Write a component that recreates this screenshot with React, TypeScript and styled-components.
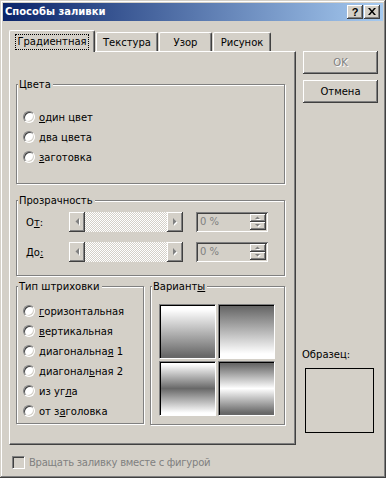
import React from 'react';
import styled, { createGlobalStyle, css } from 'styled-components';

const face = '#D4D0C8';

const GlobalStyle = createGlobalStyle`
  html, body {
    margin: 0;
    padding: 0;
    background: ${face};
  }
  body {
    font-family: 'DejaVu Sans', 'Liberation Sans', sans-serif;
    font-size: 10px;
    color: #000;
  }
  * {
    box-sizing: border-box;
  }
`;

const raised = css`
  background: ${face};
  box-shadow: inset -1px -1px #404040, inset 1px 1px #fff, inset -2px -2px #808080;
`;

const sunken = css`
  box-shadow: inset 1px 1px #808080, inset -1px -1px #fff, inset 2px 2px #404040, inset -2px -2px ${face};
`;

const Window = styled.div`
  width: 386px;
  height: 478px;
  padding: 3px;
  display: flex;
  flex-direction: column;
  background: ${face};
  box-shadow: inset -1px -1px #404040, inset 1px 1px ${face}, inset -2px -2px #808080, inset 2px 2px #fff;
`;

const TitleBar = styled.div`
  height: 18px;
  flex: none;
  display: flex;
  align-items: center;
  gap: 1px;
  padding: 0 3px 0 2px;
  background: linear-gradient(to right, #0a246a, #a6caf0);
`;

const Title = styled.div`
  flex: 1;
  color: #fff;
  font-weight: bold;
  font-size: 10px;
  line-height: 14px;
`;

const CaptionButton = styled.div`
  width: 16px;
  height: 14px;
  ${raised};
  display: flex;
  align-items: center;
  justify-content: center;
  font-family: 'Liberation Sans', sans-serif;
  font-weight: bold;
  font-size: 11px;
  line-height: 12px;
  padding-bottom: 1px;
`;

const Body = styled.div`
  display: grid;
  grid-template-columns: 287px 75px;
  column-gap: 7px;
  padding: 9px 0 0 6px;
`;

const LeftCol = styled.div`
  display: flex;
  flex-direction: column;
`;

const TabStrip = styled.div`
  height: 21px;
  display: flex;
  align-items: flex-end;
`;

const Tab = styled.div<{ $w: number; $active?: boolean }>`
  position: relative;
  z-index: ${(p) => (p.$active ? 1 : 0)};
  width: ${(p) => p.$w}px;
  height: ${(p) => (p.$active ? 22 : 19)}px;
  margin-bottom: ${(p) => (p.$active ? -1 : 0)}px;
  margin-left: ${(p) => (p.$active ? 0 : 1)}px;
  background: ${face};
  border-top: 1px solid #fff;
  border-left: 1px solid #fff;
  border-right: 1px solid #404040;
  border-top-left-radius: 2px;
  border-top-right-radius: 2px;
  box-shadow: inset -1px 0 #808080;
  display: flex;
  justify-content: center;
  padding-top: ${(p) => (p.$active ? 3 : 2)}px;
  white-space: nowrap;
`;

const TabLabel = styled.span<{ $focus?: boolean }>`
  height: 16px;
  line-height: 14px;
  padding: 0 1px;
  border: 1px ${(p) => (p.$focus ? 'dotted #000' : 'solid transparent')};
`;

const Panel = styled.div`
  height: 394px;
  border-top: 1px solid #fff;
  border-left: 1px solid #fff;
  border-right: 1px solid #404040;
  border-bottom: 1px solid #404040;
  box-shadow: inset -1px -1px #808080;
  padding-left: 6px;
  display: flex;
  flex-direction: column;
`;

const Group = styled.div<{ $w: number; $h: number; $mt?: number; $ml?: number }>`
  width: ${(p) => p.$w}px;
  height: ${(p) => p.$h}px;
  margin-top: ${(p) => p.$mt ?? 0}px;
  margin-left: ${(p) => p.$ml ?? 0}px;
  flex: none;
  border: 1px solid #808080;
  box-shadow: inset 1px 1px #fff, 1px 1px #fff;
  display: flex;
  flex-direction: column;
`;

const Caption = styled.div`
  align-self: flex-start;
  margin: -7px 0 0 1px;
  padding: 0 2px 0 1px;
  line-height: 14px;
  background: ${face};
`;

const RadioList = styled.div<{ $mt: number }>`
  margin-top: ${(p) => p.$mt}px;
  padding-left: 6px;
  display: flex;
  flex-direction: column;
`;

const RadioRow = styled.div`
  height: 20px;
  display: flex;
  align-items: center;
  gap: 4px;
  white-space: nowrap;
`;

const RadioDot = styled.span`
  width: 12px;
  height: 12px;
  flex: none;
  border-radius: 50%;
  background: #fff;
  border: 1px solid;
  border-color: #808080 #fff #fff #808080;
  box-shadow: inset 1px 1px #404040, inset -1px -1px ${face};
`;

const U = styled.span`
  text-decoration: underline;
  text-underline-offset: 1px;
`;

const SliderRows = styled.div`
  margin-top: 4px;
  padding-left: 9px;
  display: flex;
  flex-direction: column;
  gap: 10px;
`;

const SliderRow = styled.div`
  height: 20px;
  display: flex;
  align-items: center;
`;

const SliderLabel = styled.span`
  width: 43px;
  flex: none;
`;

const Track = styled.div`
  width: 114px;
  height: 20px;
  display: flex;
`;

const ArrowButton = styled.div`
  width: 16px;
  ${raised};
  display: flex;
  align-items: center;
  justify-content: center;
`;

const TrackFill = styled.div`
  flex: 1;
  background: repeating-conic-gradient(#fff 0 25%, ${face} 0 50%) 0 0 / 2px 2px;
`;

const SpinBox = styled.div`
  width: 72px;
  height: 20px;
  margin-left: 13px;
  padding: 2px;
  background: ${face};
  ${sunken};
  display: flex;
`;

const SpinText = styled.div`
  flex: 1;
  color: #808080;
  padding-left: 2px;
  line-height: 16px;
`;

const SpinButtons = styled.div`
  width: 16px;
  display: flex;
  flex-direction: column;
`;

const SpinHalf = styled.div`
  flex: 1;
  ${raised};
  display: flex;
  align-items: center;
  justify-content: center;
`;

const BottomRow = styled.div`
  display: flex;
  margin-top: 10px;
`;

const VariantGrid = styled.div`
  display: grid;
  grid-template-columns: 57px 57px;
  grid-template-rows: 55px 55px;
  gap: 2px;
  margin: 10px 0 0 8px;
`;

const Swatch = styled.div<{ $fill: string }>`
  background: ${(p) => p.$fill};
  border: 1px solid;
  border-color: #808080 #fff #fff #808080;
  box-shadow: inset 1px 1px #000;
`;

const CheckRow = styled.div`
  margin: 11px 0 0 3px;
  height: 13px;
  display: flex;
  align-items: center;
  gap: 4px;
  color: #808080;
  white-space: nowrap;
  letter-spacing: -0.25px;
`;

const CheckBox = styled.span`
  width: 13px;
  height: 13px;
  flex: none;
  background: ${face};
  border: 1px solid;
  border-color: #808080 #fff #fff #808080;
  box-shadow: inset 1px 1px #404040, inset -1px -1px ${face};
`;

const RightCol = styled.div`
  margin-top: 21px;
  display: flex;
  flex-direction: column;
`;

const PushButton = styled.div<{ $disabled?: boolean; $mt?: number }>`
  height: 23px;
  margin-top: ${(p) => p.$mt ?? 0}px;
  ${raised};
  display: flex;
  align-items: center;
  justify-content: center;
  color: ${(p) => (p.$disabled ? '#808080' : '#000')};
  text-shadow: ${(p) => (p.$disabled ? '1px 1px #fff' : 'none')};
`;

const SampleLabel = styled.div`
  margin: 245px 0 0 -1px;
  line-height: 14px;
`;

const SampleBox = styled.div`
  width: 69px;
  height: 65px;
  margin: 6px 0 0 2px;
  border: 1px solid #000;
  background: ${face};
`;

const Arrow = ({ dir }: { dir: 'left' | 'right' | 'up' | 'down' }) => {
  const pts = {
    left: '4,0 4,7 0.5,3.5',
    right: '0,0 0,7 3.5,3.5',
    up: '0,3 5,3 2.5,0.5',
    down: '0,0 5,0 2.5,2.5',
  }[dir];
  const horiz = dir === 'left' || dir === 'right';
  const w = horiz ? 5 : 6;
  const h = horiz ? 8 : 4;
  return (
    <svg width={w} height={h} viewBox={`0 0 ${w} ${h}`}>
      <polygon points={pts} fill="#fff" transform="translate(1,1)" />
      <polygon points={pts} fill="#808080" />
    </svg>
  );
};

const Slider = ({ label }: { label: React.ReactNode }) => (
  <SliderRow>
    <SliderLabel>{label}</SliderLabel>
    <Track>
      <ArrowButton>
        <Arrow dir="left" />
      </ArrowButton>
      <TrackFill />
      <ArrowButton>
        <Arrow dir="right" />
      </ArrowButton>
    </Track>
    <SpinBox>
      <SpinText>0 %</SpinText>
      <SpinButtons>
        <SpinHalf>
          <Arrow dir="up" />
        </SpinHalf>
        <SpinHalf>
          <Arrow dir="down" />
        </SpinHalf>
      </SpinButtons>
    </SpinBox>
  </SliderRow>
);

const Radio = ({ children }: { children: React.ReactNode }) => (
  <RadioRow>
    <RadioDot />
    <span>{children}</span>
  </RadioRow>
);

const dark = '#686868';
const swatches = [
  `linear-gradient(#fff 8%, ${dark} 96%)`,
  `linear-gradient(${dark} 4%, #fff 92%)`,
  `linear-gradient(#fff 4%, ${dark} 50%, #fff 96%)`,
  `linear-gradient(${dark} 4%, #fff 50%, ${dark} 96%)`,
];

const App = () => (
  <>
    <GlobalStyle />
    <Window>
      <TitleBar>
        <Title>Способы заливки</Title>
        <CaptionButton>?</CaptionButton>
        <CaptionButton>
          <svg width="8" height="7" viewBox="0 0 8 7">
            <path d="M0 0h2l2 2.5L6 0h2L5 3.5 8 7H6L4 4.5 2 7H0l3-3.5z" fill="#000" />
          </svg>
        </CaptionButton>
      </TitleBar>
      <Body>
        <LeftCol>
          <TabStrip>
            <Tab $w={86} $active>
              <TabLabel $focus>Градиентная</TabLabel>
            </Tab>
            <Tab $w={62}>
              <TabLabel>Текстура</TabLabel>
            </Tab>
            <Tab $w={53}>
              <TabLabel>Узор</TabLabel>
            </Tab>
            <Tab $w={58}>
              <TabLabel>Рисунок</TabLabel>
            </Tab>
          </TabStrip>
          <Panel>
            <Group $w={269} $h={100} $mt={32}>
              <Caption>Цвета</Caption>
              <RadioList $mt={15}>
                <Radio>
                  <U>о</U>дин цвет
                </Radio>
                <Radio>
                  <U>д</U>ва цвета
                </Radio>
                <Radio>
                  <U>з</U>аготовка
                </Radio>
              </RadioList>
            </Group>
            <Group $w={269} $h={76} $mt={16}>
              <Caption>Прозрачность</Caption>
              <SliderRows>
                <Slider
                  label={
                    <>
                      О<U>т</U>:
                    </>
                  }
                />
                <Slider
                  label={
                    <>
                      До<U>:</U>
                    </>
                  }
                />
              </SliderRows>
            </Group>
            <BottomRow>
              <Group $w={128} $h={138}>
                <Caption>Тип штриховки</Caption>
                <RadioList $mt={7}>
                  <Radio>
                    <U>г</U>оризонтальная
                  </Radio>
                  <Radio>
                    <U>в</U>ертикальная
                  </Radio>
                  <Radio>
                    диагональна<U>я</U> 1
                  </Radio>
                  <Radio>
                    диагонал<U>ь</U>ная 2
                  </Radio>
                  <Radio>
                    из уг<U>л</U>а
                  </Radio>
                  <Radio>
                    от з<U>а</U>головка
                  </Radio>
                </RadioList>
              </Group>
              <Group $w={135} $h={139} $ml={6}>
                <Caption>
                  Вариант<U>ы</U>
                </Caption>
                <VariantGrid>
                  {swatches.map((fill, i) => (
                    <Swatch key={i} $fill={fill} />
                  ))}
                </VariantGrid>
              </Group>
            </BottomRow>
          </Panel>
          <CheckRow>
            <CheckBox />
            <span>Вращать заливку вместе с фигурой</span>
          </CheckRow>
        </LeftCol>
        <RightCol>
          <PushButton $disabled>OK</PushButton>
          <PushButton $mt={6}>Отмена</PushButton>
          <SampleLabel>Образец:</SampleLabel>
          <SampleBox />
        </RightCol>
      </Body>
    </Window>
  </>
);

export default App;
